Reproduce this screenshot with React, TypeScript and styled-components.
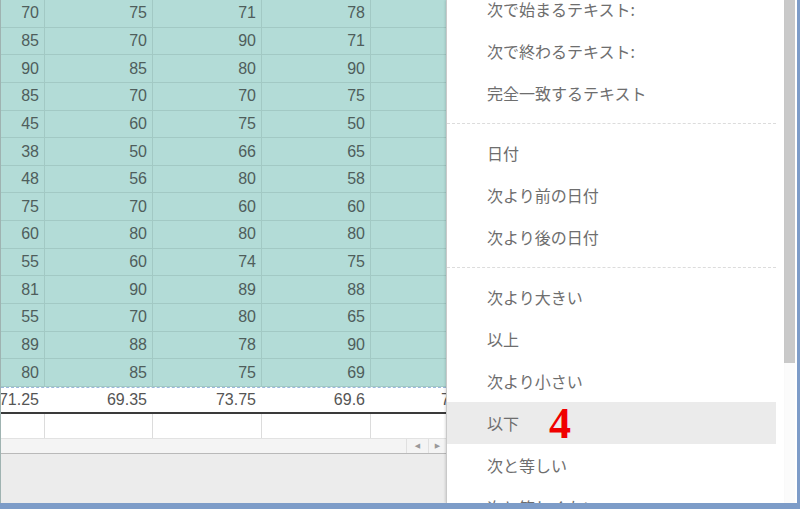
import React from "react";
import styled, { createGlobalStyle } from "styled-components";

const Global = createGlobalStyle`
  html, body { margin: 0; padding: 0; background: #fff; }
  body { width: 800px; height: 509px; overflow: hidden; }
`;

const Window = styled.div`
  width: 800px;
  height: 509px;
  box-sizing: border-box;
  display: flex;
  flex-direction: column;
  border-bottom: 6px solid #7d9cc8;
  border-right: 3px solid #7d9cc8;
  background: #fff;
  overflow: hidden;
`;

const Main = styled.div`
  flex: 1;
  display: flex;
  min-height: 0;
`;

const SheetPane = styled.div`
  width: 446px;
  flex: none;
  display: flex;
  flex-direction: column;
  overflow: hidden;
  border-left: 1px solid #9fb3b1;
  box-sizing: border-box;
`;

const COLS = "44px 108px 109px 109px 116px";

const DataGrid = styled.div`
  display: grid;
  grid-template-columns: ${COLS};
  grid-template-rows: repeat(14, 1fr);
  height: 387px;
  flex: none;
  background: #b3dcd7;
`;

const Cell = styled.div<{ $variant?: "data" | "sum" | "empty" }>`
  display: flex;
  align-items: center;
  justify-content: flex-end;
  padding-right: 5px;
  box-sizing: border-box;
  font-family: "Liberation Sans", Arial, sans-serif;
  font-size: 16px;
  white-space: nowrap;
  overflow: visible;
  color: ${(p) => (p.$variant === "data" ? "#4f5e5c" : "#555")};
  border-right: ${(p) =>
    p.$variant === "data"
      ? "1px solid #a2c9c4"
      : p.$variant === "empty"
      ? "1px solid #dcdcdc"
      : "1px solid transparent"};
  border-bottom: ${(p) =>
    p.$variant === "data" ? "1px solid #a2c9c4" : "none"};
`;

const SumRow = styled.div`
  display: grid;
  grid-template-columns: ${COLS};
  height: 27px;
  flex: none;
  background: #fff;
  border-top: 1px dashed #9bb8dc;
  border-bottom: 2px solid #3a3a3a;
  box-sizing: border-box;
`;

const EmptyRow = styled.div`
  display: grid;
  grid-template-columns: ${COLS};
  height: 24px;
  flex: none;
  background: #fff;
`;

const HScroll = styled.div`
  height: 16px;
  flex: none;
  display: flex;
  justify-content: flex-end;
  background: #f4f4f4;
  border-top: 1px solid #e2e2e2;
  border-bottom: 1px solid #b9b9b9;
  box-sizing: border-box;
`;

const ScrollBtn = styled.div<{ $w: number }>`
  width: ${(p) => p.$w}px;
  display: flex;
  align-items: center;
  justify-content: center;
  border-left: 1px solid #e0e0e0;
  color: #9a9a9a;
  font-size: 7px;
  font-family: "DejaVu Sans", sans-serif;
`;

const GrayArea = styled.div`
  flex: 1;
  background: #ececec;
`;

const Menu = styled.div`
  width: 338px;
  flex: none;
  box-sizing: border-box;
  border-left: 1px solid #c9c9c9;
  box-shadow: -1px 0 2px rgba(0, 0, 0, 0.12);
  padding-right: 8px;
  overflow: hidden;
  background: #fff;
  position: relative;
  z-index: 1;
`;

const MenuList = styled.div`
  margin-top: -12px;
  display: flex;
  flex-direction: column;
`;

const Item = styled.div<{ $active?: boolean }>`
  height: 42px;
  flex: none;
  display: flex;
  align-items: center;
  gap: 30px;
  padding-left: 40px;
  font-family: "Noto Sans CJK JP", "Noto Sans", sans-serif;
  font-size: 16px;
  color: #6e6e6e;
  background: ${(p) => (p.$active ? "#ebebeb" : "transparent")};
  white-space: nowrap;
`;

const Separator = styled.div`
  height: 18px;
  flex: none;
  display: flex;
  align-items: center;
  &::after {
    content: "";
    flex: 1;
    border-top: 1px dashed #dcdcdc;
  }
`;

const Badge = styled.span`
  font-family: "Liberation Serif", "Times New Roman", serif;
  font-weight: bold;
  font-size: 44px;
  line-height: 1;
  color: #f00000;
  margin-top: 2px;
`;

const VScroll = styled.div`
  width: 11px;
  flex: none;
  background: #fbfbfb;
  margin-right: 2px;
`;

const Thumb = styled.div`
  height: 363px;
  background: #c9c9c9;
`;

const data: number[][] = [
  [70, 75, 71, 78],
  [85, 70, 90, 71],
  [90, 85, 80, 90],
  [85, 70, 70, 75],
  [45, 60, 75, 50],
  [38, 50, 66, 65],
  [48, 56, 80, 58],
  [75, 70, 60, 60],
  [60, 80, 80, 80],
  [55, 60, 74, 75],
  [81, 90, 89, 88],
  [55, 70, 80, 65],
  [89, 88, 78, 90],
  [80, 85, 75, 69],
];

const sums = ["71.25", "69.35", "73.75", "69.6", "72.35"];

type Entry = { label: string; active?: boolean; sep?: boolean };

const menu: Entry[] = [
  { label: "次で始まるテキスト:" },
  { label: "次で終わるテキスト:" },
  { label: "完全一致するテキスト" },
  { label: "", sep: true },
  { label: "日付" },
  { label: "次より前の日付" },
  { label: "次より後の日付" },
  { label: "", sep: true },
  { label: "次より大きい" },
  { label: "以上" },
  { label: "次より小さい" },
  { label: "以下", active: true },
  { label: "次と等しい" },
  { label: "次と等しくない" },
];

export default function App() {
  return (
    <>
      <Global />
      <Window>
        <Main>
          <SheetPane>
            <DataGrid>
              {data.map((row, r) => (
                <React.Fragment key={r}>
                  {row.map((v, c) => (
                    <Cell key={c} $variant="data">
                      {v}
                    </Cell>
                  ))}
                  <Cell $variant="data" />
                </React.Fragment>
              ))}
            </DataGrid>
            <SumRow>
              {sums.map((s, i) => (
                <Cell key={i} $variant="sum">
                  {s}
                </Cell>
              ))}
            </SumRow>
            <EmptyRow>
              {sums.map((_, i) => (
                <Cell key={i} $variant="empty" />
              ))}
            </EmptyRow>
            <HScroll>
              <ScrollBtn $w={21}>◀</ScrollBtn>
              <ScrollBtn $w={17}>▶</ScrollBtn>
            </HScroll>
            <GrayArea />
          </SheetPane>
          <Menu>
            <MenuList>
              {menu.map((m, i) =>
                m.sep ? (
                  <Separator key={i} />
                ) : (
                  <Item key={i} $active={m.active}>
                    {m.label}
                    {m.active && <Badge>4</Badge>}
                  </Item>
                )
              )}
            </MenuList>
          </Menu>
          <VScroll>
            <Thumb />
          </VScroll>
        </Main>
      </Window>
    </>
  );
}
